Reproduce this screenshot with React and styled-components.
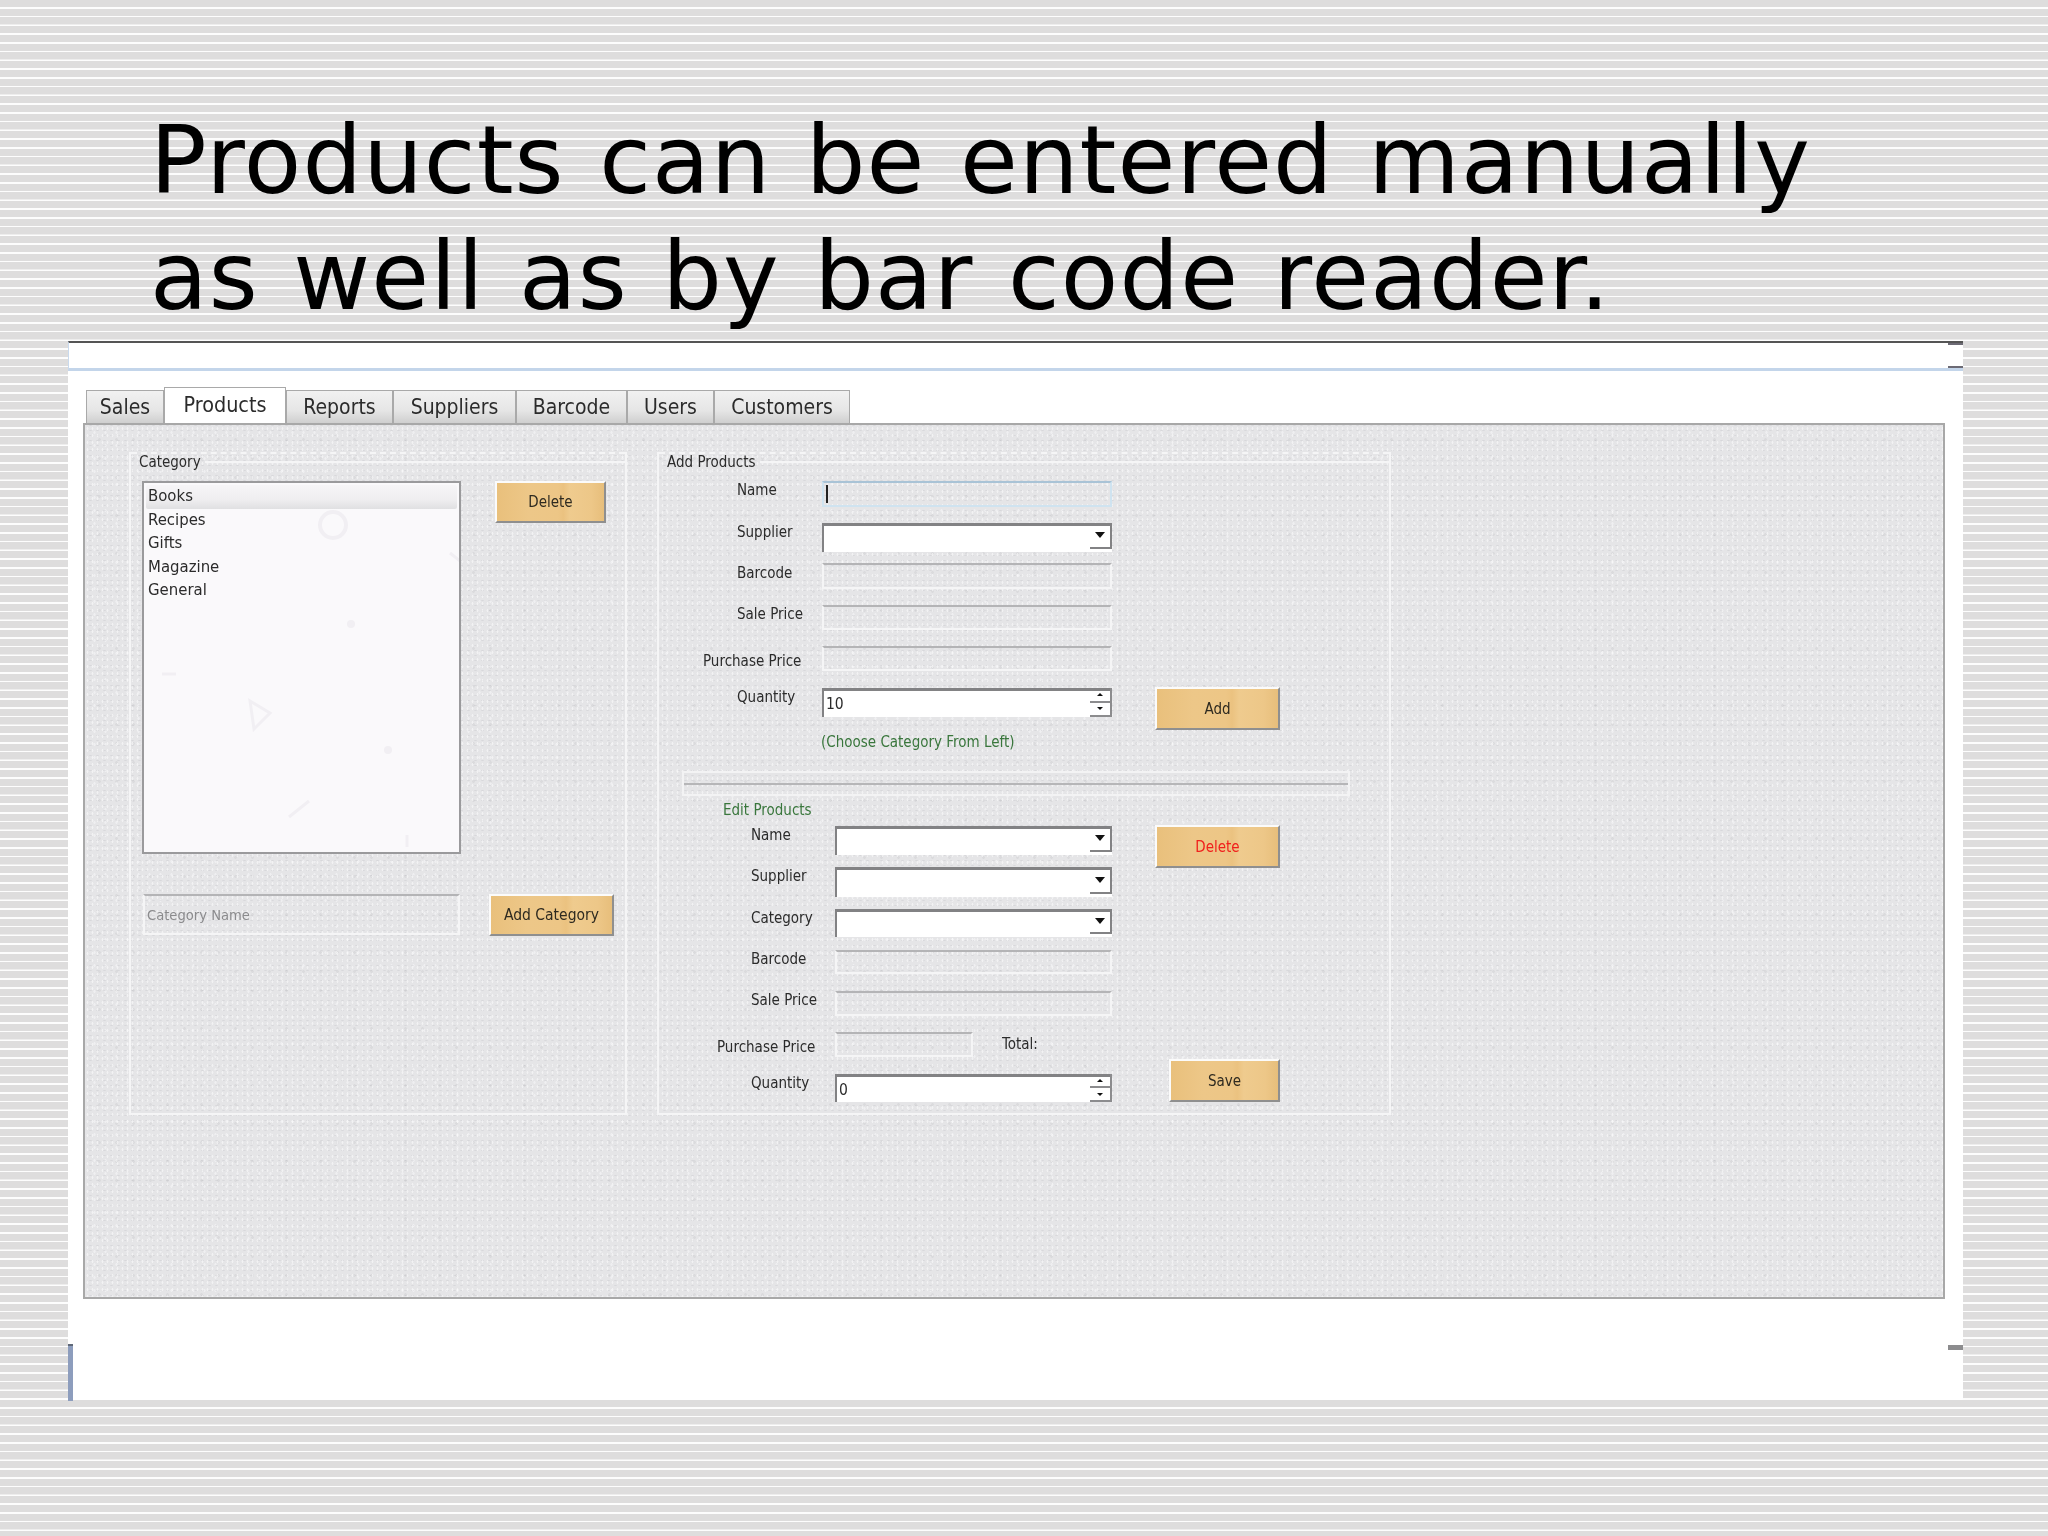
import React from "react";
import styled, { createGlobalStyle } from "styled-components";

const GlobalStyle = createGlobalStyle`
  html, body {
    margin: 0;
    padding: 0;
  }
  body {
    font-family: "DejaVu Sans Condensed", "DejaVu Sans", sans-serif;
  }
`;

const Page = styled.div`
  width: 2048px;
  height: 1536px;
  overflow: hidden;
  background: repeating-linear-gradient(
    180deg,
    #dedddd 0,
    #dedddd 6.9px,
    #fdfdfd 7.1px,
    #fdfdfd 8.5px,
    #dedddd 8.75px
  );
`;

const Title = styled.h1`
  margin: 0;
  height: 341px;
  box-sizing: border-box;
  padding: 103px 0 0 150px;
  font-family: "DejaVu Sans", sans-serif;
  font-weight: 400;
  font-size: 94px;
  letter-spacing: 1.1px;
  word-spacing: 3.5px;
  line-height: 116px;
  color: #000;
  white-space: nowrap;
`;

const Window = styled.div`
  margin-left: 68px;
  width: 1895px;
  height: 1059px;
  background: #fff;
  display: flex;
  flex-direction: column;
  filter: blur(0.3px);
`;

const TitleBar = styled.div`
  height: 25px;
  flex-shrink: 0;
  border-top: 2px solid #555;
  border-left: 1px solid #c9daee;
  border-bottom: 3px solid #c3d5ea;
  display: flex;
  flex-direction: column;
  justify-content: space-between;
  align-items: flex-end;
`;

const BarMark = styled.div`
  width: 15px;
  height: 2px;
  background: #6c6a74;
`;

const TabStrip = styled.div`
  display: flex;
  align-items: flex-end;
  flex-shrink: 0;
  height: 36px;
  margin: 16px 0 0 18px;
`;

const Tab = styled.div`
  box-sizing: border-box;
  width: ${(p) => p.$w}px;
  height: ${(p) => (p.$active ? 36 : 33)}px;
  display: flex;
  align-items: center;
  justify-content: center;
  font-size: ${(p) => (p.$active ? 21.4 : 21)}px;
  color: #2b2b2b;
  border: 1px solid #a9a9a9;
  border-bottom: none;
  background: ${(p) =>
    p.$active ? "#fff" : "linear-gradient(180deg, #f1f1f1 0%, #e6e6e6 60%, #cfcfcf 100%)"};
  padding-bottom: ${(p) => (p.$active ? 3 : 0)}px;
`;

const Panel = styled.div`
  box-sizing: border-box;
  flex-shrink: 0;
  width: 1862px;
  height: 876px;
  margin-left: 15px;
  padding: 27px 0 0 44px;
  display: flex;
  align-items: flex-start;
  gap: 30px;
  border: 2px solid #a8a8a8;
  background-color: #e5e5e7;
  background-image:
    radial-gradient(rgba(255, 255, 255, 0.5) 0.7px, transparent 1.2px),
    radial-gradient(rgba(120, 120, 125, 0.12) 0.8px, transparent 1.3px),
    radial-gradient(rgba(255, 255, 255, 0.4) 0.9px, transparent 1.4px),
    radial-gradient(rgba(120, 120, 125, 0.09) 1px, transparent 1.6px);
  background-size: 5px 7px, 7px 5px, 11px 13px, 17px 19px;
  background-position: 0 0, 2px 3px, 4px 1px, 6px 5px;
`;

const Group = styled.section`
  box-sizing: border-box;
  width: ${(p) => p.$w}px;
  height: 663px;
  border: 2px solid #f5f5f6;
  border-top: none;
`;

const GroupHead = styled.div`
  height: 21px;
  box-sizing: border-box;
  border-top: 2px dashed #f5f5f6;
  display: flex;
  align-items: flex-start;
`;

const Legend = styled.span`
  margin: -1px 0 0 8px;
  font-size: 15px;
  line-height: 18px;
  color: #2b2b2b;
`;

const HeadLine = styled.span`
  flex: 1;
  height: 2px;
  margin: 7px 0 0 4px;
  background: #f5f5f6;
`;

const GroupRow = styled.div`
  display: flex;
  align-items: flex-start;
  margin: ${(p) => p.$top}px 0 0 ${(p) => p.$left}px;
`;

const ListBox = styled.div`
  position: relative;
  box-sizing: border-box;
  width: 319px;
  height: 373px;
  padding: 2px 2px;
  border: 2px solid #9a9a9c;
  background: #faf9fb;
`;

const ListDecor = styled.svg`
  position: absolute;
  inset: 0;
`;

const ListItem = styled.div`
  position: relative;
  height: 23.5px;
  padding-left: 2px;
  font-size: 16.6px;
  line-height: 21.5px;
  color: #2b2b2b;
  ${(p) =>
    p.$selected &&
    `
    background: linear-gradient(180deg, #f6f5f7 0%, #efeef0 60%, #e0e0e2 100%);
    border-radius: 2px;
  `}
`;

const WoodButton = styled.div`
  box-sizing: border-box;
  width: ${(p) => p.$w}px;
  height: ${(p) => p.$h}px;
  margin: ${(p) => p.$margin || "0"};
  flex-shrink: 0;
  display: flex;
  align-items: center;
  justify-content: center;
  font-size: ${(p) => p.$size || 15}px;
  color: ${(p) => p.$color || "#2e2a20"};
  border: 2px solid #fbfbfb;
  border-right-color: #8f8f8f;
  border-bottom-color: #8f8f8f;
  background: linear-gradient(
    90deg,
    #e9c07c 0%,
    #edc788 30%,
    #edc686 57%,
    #ebc280 62%,
    #efcb8e 68%,
    #edc788 88%,
    #e7be7b 100%
  );
`;

const PlainInput = styled.div`
  box-sizing: border-box;
  width: ${(p) => p.$w}px;
  height: ${(p) => p.$h}px;
  flex-shrink: 0;
  display: flex;
  align-items: center;
  padding-left: 2px;
  font-size: 14.6px;
  color: #8b8b8d;
  border: 2px solid #f5f5f6;
  border-top-color: ${(p) => (p.$focused ? "#a9c3d6" : "#b4b4b6")};
  ${(p) => p.$focused && "border-left-color: #cfe3f0; border-right-color: #cfe3f0; border-bottom-color: #cfe3f0;"}
`;

const Caret = styled.span`
  display: block;
  width: 1.5px;
  height: 18px;
  background: #222;
`;

const Field = styled.div`
  position: relative;
  box-sizing: border-box;
  width: ${(p) => p.$w}px;
  height: ${(p) => p.$h}px;
  flex-shrink: 0;
  display: flex;
  align-items: center;
  padding-left: 2px;
  font-size: 15.5px;
  color: #2b2b2b;
  background: #fff;
  border-top: 3px solid #828284;
  border-left: 2px solid #828284;
`;

const ComboButton = styled.div`
  position: absolute;
  top: -3px;
  right: 0;
  bottom: 3px;
  width: 22px;
  display: flex;
  align-items: center;
  justify-content: center;
  box-sizing: border-box;
  border-right: 2px solid #828284;
  border-bottom: 2px solid #828284;
`;

const SpinBox = styled.div`
  position: absolute;
  top: -3px;
  right: 0;
  bottom: 0;
  width: 22px;
  display: flex;
  flex-direction: column;
`;

const SpinPart = styled.div`
  flex: 1;
  display: flex;
  align-items: center;
  justify-content: center;
  box-sizing: border-box;
  border-right: 2px solid #8c8c8e;
  border-bottom: 2px solid #8c8c8e;
`;

const Arrow = styled.span`
  width: 0;
  height: 0;
  border-left: ${(p) => p.$size}px solid transparent;
  border-right: ${(p) => p.$size}px solid transparent;
  ${(p) =>
    p.$up
      ? `border-bottom: ${p.$size}px solid #111;`
      : `border-top: ${p.$size + (p.$size > 3 ? 1 : 0)}px solid #111;`}
`;

const Row = styled.div`
  display: flex;
  align-items: flex-start;
  margin-top: ${(p) => p.$top}px;
`;

const LabelCell = styled.div`
  box-sizing: border-box;
  width: ${(p) => p.$w}px;
  flex-shrink: 0;
  padding: ${(p) => p.$drop || 0}px 0 0 ${(p) => p.$indent}px;
  font-size: 15px;
  line-height: 18px;
  color: #2b2b2b;
  white-space: nowrap;
`;

const Total = styled.span`
  margin-left: 29px;
  padding-top: 3px;
  font-size: 15px;
  line-height: 18px;
  color: #2b2b2b;
`;

const GreenText = styled.div`
  height: ${(p) => p.$h}px;
  margin: ${(p) => p.$top}px 0 0 ${(p) => p.$left}px;
  font-size: 15px;
  line-height: ${(p) => p.$h}px;
  color: #39763c;
`;

const Separator = styled.div`
  box-sizing: border-box;
  width: 668px;
  height: 25px;
  margin: 19px 0 0 23px;
  border: 2px solid #f3f3f4;
  display: flex;
  align-items: center;
`;

const SeparatorLine = styled.div`
  width: 100%;
  height: 2px;
  background: #b6b6b8;
`;

const EditSection = styled.div`
  display: flex;
  margin-top: 6px;
`;

const EditFields = styled.div`
  padding-top: 1px;
`;

const EditButtons = styled.div`
  width: 125px;
  margin-left: 43px;
  display: flex;
  flex-direction: column;
  justify-content: space-between;
  align-items: flex-end;
`;

const Footer = styled.div`
  flex: 1;
  display: flex;
  justify-content: space-between;
  align-items: flex-start;
`;

const FooterBar = styled.div`
  width: 5px;
  height: 55px;
  margin-top: 45px;
  background: #8d9dbd;
  border-top: 2px solid #5f6878;
`;

const FooterMark = styled.div`
  width: 15px;
  height: 5px;
  margin-top: 46px;
  background: #8c8c8e;
`;

const TABS = [
  { label: "Sales", w: 78 },
  { label: "Products", w: 122, active: true },
  { label: "Reports", w: 107 },
  { label: "Suppliers", w: 123 },
  { label: "Barcode", w: 111 },
  { label: "Users", w: 87 },
  { label: "Customers", w: 136 },
];

const CATEGORIES = ["Books", "Recipes", "Gifts", "Magazine", "General"];

function Combo({ w, h }) {
  return (
    <Field $w={w} $h={h}>
      <ComboButton>
        <Arrow $size={5} />
      </ComboButton>
    </Field>
  );
}

function Spinner({ w, h, value }) {
  return (
    <Field $w={w} $h={h}>
      {value}
      <SpinBox>
        <SpinPart>
          <Arrow $size={3} $up />
        </SpinPart>
        <SpinPart>
          <Arrow $size={3} />
        </SpinPart>
      </SpinBox>
    </Field>
  );
}

export default function App() {
  return (
    <Page>
      <GlobalStyle />
      <Title>
        Products can be entered manually
        <br />
        as well as by bar code reader.
      </Title>
      <Window>
        <TitleBar>
          <BarMark />
          <BarMark />
        </TitleBar>
        <TabStrip>
          {TABS.map((t) => (
            <Tab key={t.label} $w={t.w} $active={t.active}>
              {t.label}
            </Tab>
          ))}
        </TabStrip>
        <Panel>
          <Group $w={498}>
            <GroupHead>
              <Legend>Category</Legend>
              <HeadLine />
            </GroupHead>
            <GroupRow $top={8} $left={11}>
              <ListBox>
                <ListDecor width="315" height="368" fill="none" stroke="#f1eff3">
                  <circle cx="189" cy="42" r="13" strokeWidth="4" />
                  <path d="M106 218l20 12-16 16z" strokeWidth="3" />
                  <path d="M145 334l20-16" strokeWidth="3" />
                  <path d="M306 70l10 8M18 191h14M263 352v12" strokeWidth="3" />
                  <circle cx="207" cy="141" r="4" fill="#f1eff3" stroke="none" />
                  <circle cx="244" cy="267" r="4" fill="#f1eff3" stroke="none" />
                </ListDecor>
                {CATEGORIES.map((c, i) => (
                  <ListItem key={c} $selected={i === 0}>
                    {c}
                  </ListItem>
                ))}
              </ListBox>
              <WoodButton $w={111} $h={42} $margin="0 0 0 34px">
                Delete
              </WoodButton>
            </GroupRow>
            <GroupRow $top={40} $left={12}>
              <PlainInput $w={317} $h={41}>Category Name</PlainInput>
              <WoodButton $w={125} $h={42} $margin="0 0 0 29px" $size={15.5}>
                Add Category
              </WoodButton>
            </GroupRow>
          </Group>

          <Group $w={734}>
            <GroupHead>
              <Legend>Add Products</Legend>
              <HeadLine />
            </GroupHead>
            <Row $top={8}>
              <LabelCell $w={163} $indent={78}>Name</LabelCell>
              <PlainInput $w={290} $h={26} $focused>
                <Caret />
              </PlainInput>
            </Row>
            <Row $top={16}>
              <LabelCell $w={163} $indent={78}>Supplier</LabelCell>
              <Combo w={290} h={29} />
            </Row>
            <Row $top={11}>
              <LabelCell $w={163} $indent={78} $drop={1}>Barcode</LabelCell>
              <PlainInput $w={290} $h={26} />
            </Row>
            <Row $top={16}>
              <LabelCell $w={163} $indent={78}>Sale Price</LabelCell>
              <PlainInput $w={290} $h={25} />
            </Row>
            <Row $top={16}>
              <LabelCell $w={163} $indent={44} $drop={6}>Purchase Price</LabelCell>
              <PlainInput $w={290} $h={25} />
            </Row>
            <Row $top={17}>
              <LabelCell $w={163} $indent={78}>Quantity</LabelCell>
              <Spinner w={290} h={29} value="10" />
              <WoodButton $w={125} $h={43} $margin="-1px 0 0 43px">
                Add
              </WoodButton>
            </Row>
            <GreenText $h={20} $top={2} $left={162}>
              (Choose Category From Left)
            </GreenText>
            <Separator>
              <SeparatorLine />
            </Separator>
            <GreenText $h={18} $top={5} $left={64}>
              Edit Products
            </GreenText>
            <EditSection>
              <EditFields>
                <Row $top={0}>
                  <LabelCell $w={176} $indent={92}>Name</LabelCell>
                  <Combo w={277} h={29} />
                </Row>
                <Row $top={12}>
                  <LabelCell $w={176} $indent={92}>Supplier</LabelCell>
                  <Combo w={277} h={30} />
                </Row>
                <Row $top={12}>
                  <LabelCell $w={176} $indent={92}>Category</LabelCell>
                  <Combo w={277} h={28} />
                </Row>
                <Row $top={13}>
                  <LabelCell $w={176} $indent={92}>Barcode</LabelCell>
                  <PlainInput $w={277} $h={24} />
                </Row>
                <Row $top={17}>
                  <LabelCell $w={176} $indent={92}>Sale Price</LabelCell>
                  <PlainInput $w={277} $h={25} />
                </Row>
                <Row $top={16}>
                  <LabelCell $w={176} $indent={58} $drop={6}>Purchase Price</LabelCell>
                  <PlainInput $w={138} $h={25} />
                  <Total>Total:</Total>
                </Row>
                <Row $top={17}>
                  <LabelCell $w={176} $indent={92}>Quantity</LabelCell>
                  <Spinner w={277} h={28} value="0" />
                </Row>
              </EditFields>
              <EditButtons>
                <WoodButton $w={125} $h={43} $color="#f0201c">
                  Delete
                </WoodButton>
                <WoodButton $w={111} $h={43}>
                  Save
                </WoodButton>
              </EditButtons>
            </EditSection>
          </Group>
        </Panel>
        <Footer>
          <FooterBar />
          <FooterMark />
        </Footer>
      </Window>
    </Page>
  );
}
